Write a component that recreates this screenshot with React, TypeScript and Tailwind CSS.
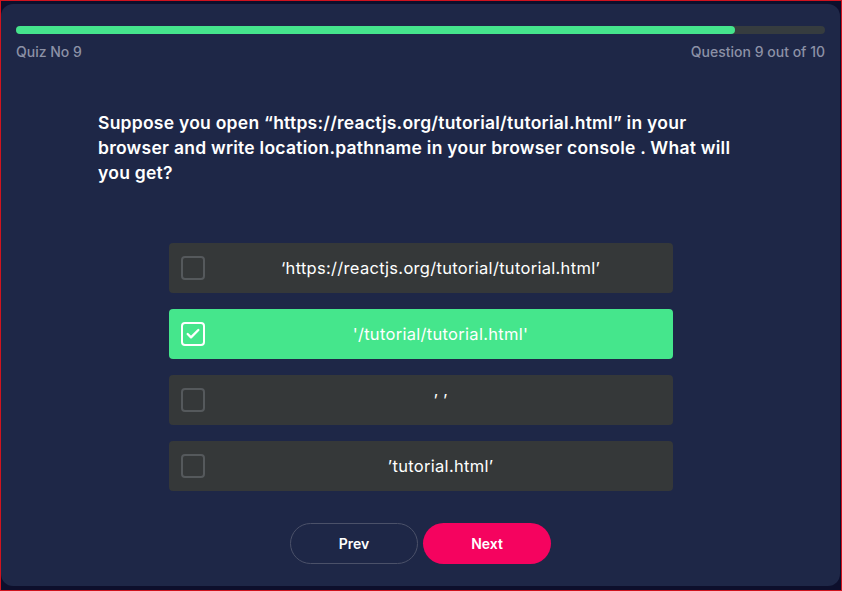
import { Check } from 'lucide-react'

const options = [
  { id: 'a', label: '‘https://reactjs.org/tutorial/tutorial.html’' },
  { id: 'b', label: "'/tutorial/tutorial.html'" },
  { id: 'c', label: '’ ’' },
  { id: 'd', label: '’tutorial.html’' },
]

const selected = 'b'
const current = 9
const total = 10

export default function App() {
  return (
    <div
      className="w-[842px] h-[591px] border border-[#d0141e] bg-[#0d0f2c] pt-[3px] pb-[4px] pr-[1px] overflow-hidden"
      style={{ fontFamily: 'Inter, "Noto Sans", sans-serif' }}
    >
      <div className="h-full rounded-xl bg-[#1e2747] px-[15px] pt-[22px]">
        {/* Progress */}
        <div className="h-2 rounded-full bg-[#363c3f]">
          <div className="h-full w-[719px] rounded-full bg-[#45e48d]" />
        </div>
        <div className="mt-2 flex justify-between text-[14px] leading-5 font-medium text-[#8c91a6]">
          <span>Quiz No {current}</span>
          <span>Question {current} out of {total}</span>
        </div>

        {/* Question */}
        <p className="mt-[48px] ml-[82px] w-[640px] text-[17.5px] leading-[25px] font-semibold text-white tracking-[0.25px]">
          Suppose you open “https://reactjs.org/tutorial/tutorial.html” in your browser and write location.pathname in your browser console . What will you get?
        </p>

        {/* Options */}
        <div className="mx-auto mt-[58px] flex w-[504px] flex-col gap-4">
          {options.map(o => {
            const on = o.id === selected
            return (
              <div
                key={o.id}
                className={`flex h-[50px] items-center rounded pl-3 ${on ? 'bg-[#45e68c]' : 'bg-[#353839]'}`}
              >
                <span
                  className={`flex h-6 w-6 shrink-0 items-center justify-center rounded-[4px] border-2 ${on ? 'border-white' : 'border-[#55595c]'}`}
                >
                  {on && <Check size={16} strokeWidth={3.5} className="text-white" />}
                </span>
                <span className="ml-1 flex-1 text-center text-[16.5px] tracking-[0.3px] text-white">{o.label}</span>
              </div>
            )
          })}
        </div>

        {/* Nav */}
        <div className="mt-8 flex justify-center gap-[5px]">
          <button className="h-[41px] w-[128px] rounded-full border border-[#4b5169] text-[14px] font-semibold text-white">
            Prev
          </button>
          <button className="h-[41px] w-[128px] rounded-full bg-[#f5035f] text-[14px] font-semibold text-white">
            Next
          </button>
        </div>
      </div>
    </div>
  )
}
